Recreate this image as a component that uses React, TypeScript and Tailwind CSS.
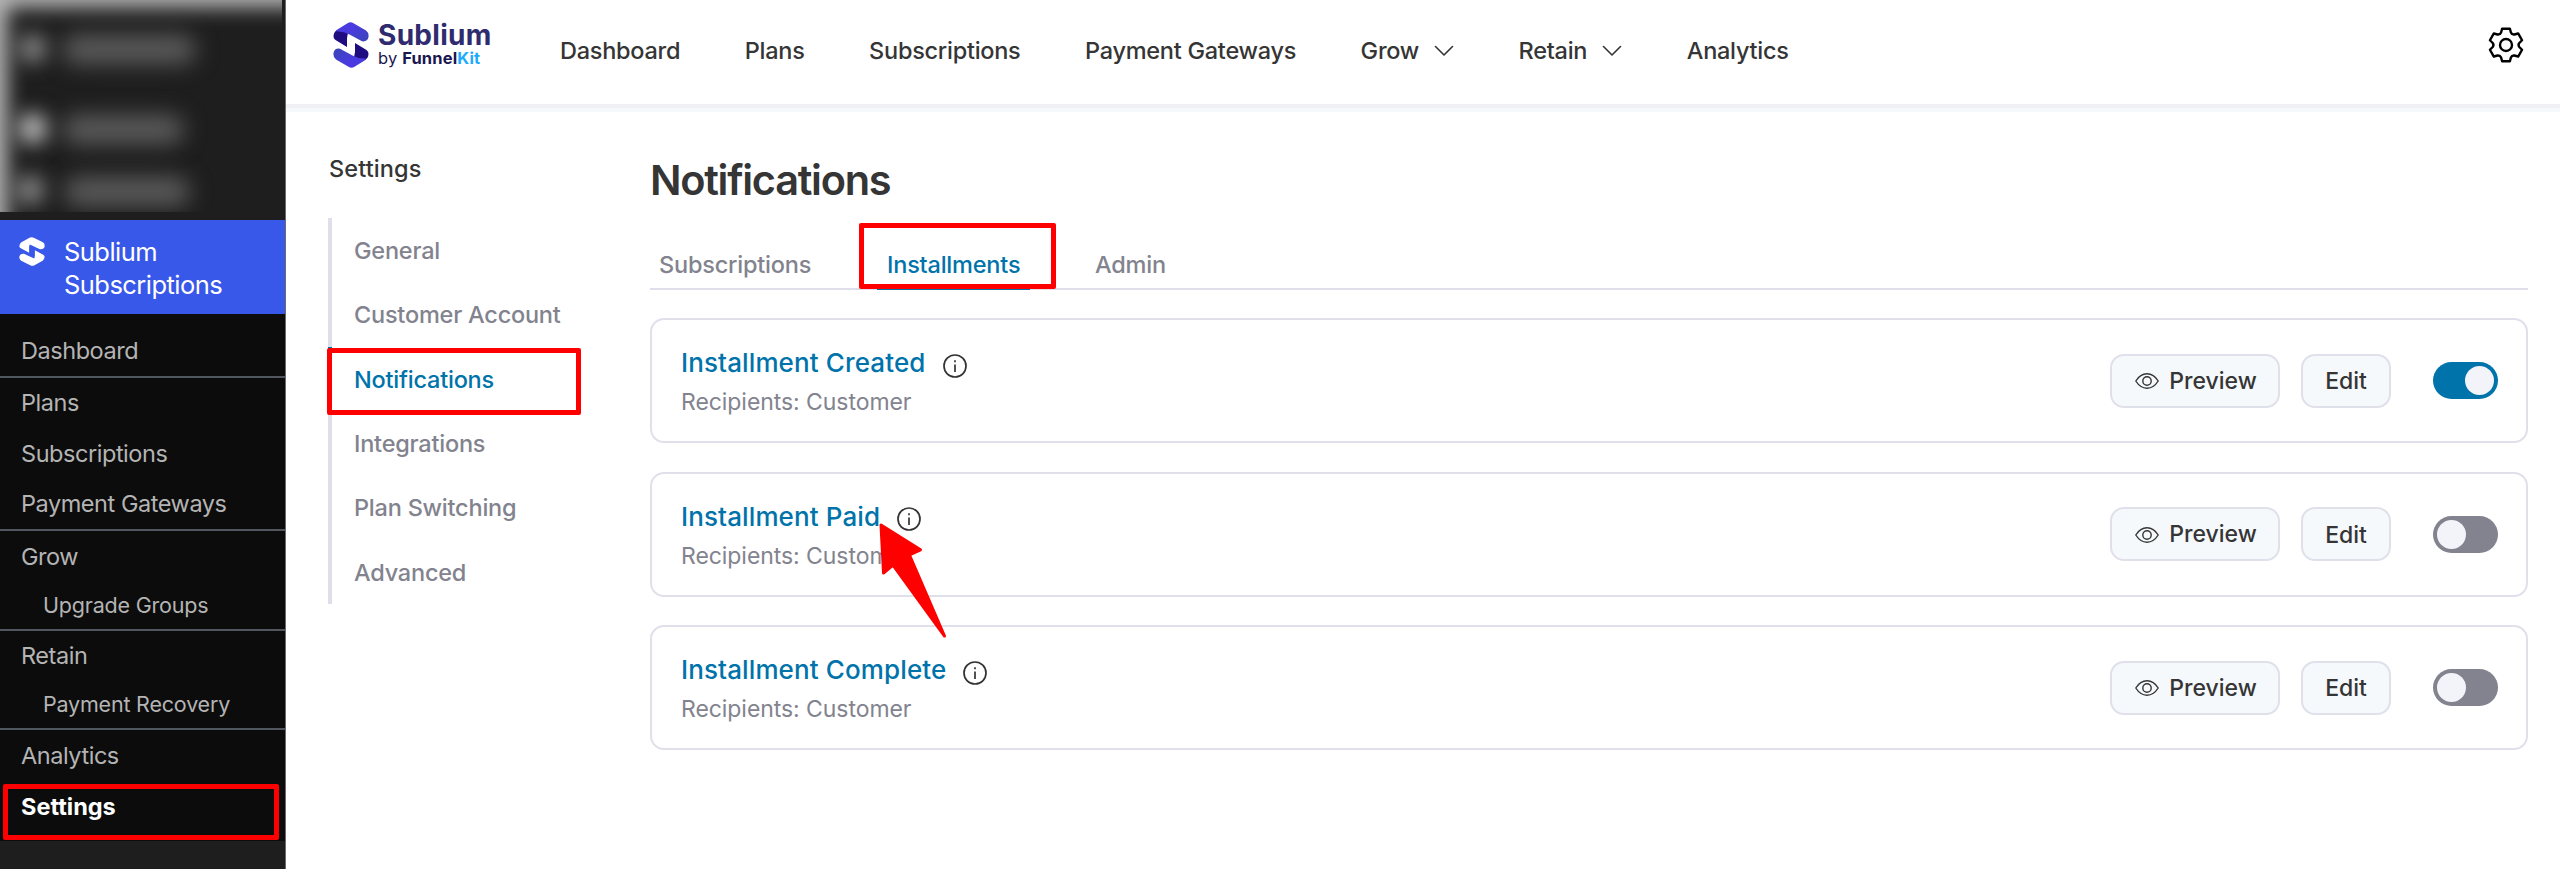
import clsx from "clsx";

const sidebarItems = [
  { label: "Dashboard", divider: true },
  { label: "Plans" },
  { label: "Subscriptions" },
  { label: "Payment Gateways", divider: true },
  { label: "Grow" },
  { label: "Upgrade Groups", child: true, divider: true },
  { label: "Retain" },
  { label: "Payment Recovery", child: true, divider: true },
  { label: "Analytics" },
  { label: "Settings", active: true },
];

const navItems = [
  { label: "Dashboard" },
  { label: "Plans" },
  { label: "Subscriptions" },
  { label: "Payment Gateways" },
  { label: "Grow", menu: true },
  { label: "Retain", menu: true },
  { label: "Analytics" },
];

const settingsItems = [
  "General",
  "Customer Account",
  "Notifications",
  "Integrations",
  "Plan Switching",
  "Advanced",
];

const notifications = [
  { title: "Installment Created", enabled: true },
  { title: "Installment Paid", enabled: false, arrow: true },
  { title: "Installment Complete", enabled: false },
];

// one tooth of the gear, repeated every 60 degrees
const tooth = [
  [-3.9, -16.3],
  [3.9, -16.3],
  [4.9, -12.5],
  [5.9, -10.2],
  [8.37, -10.5],
];

function gearPath() {
  let d = "";
  for (let i = 0; i < 6; i++) {
    const a = (i * Math.PI) / 3;
    const [p0, p1, p2, q, p3] = tooth.map(([x, y]) =>
      `${(x * Math.cos(a) - y * Math.sin(a)).toFixed(2)} ${(x * Math.sin(a) + y * Math.cos(a)).toFixed(2)}`
    );
    d += `${i === 0 ? "M" : "L"}${p0}L${p1}L${p2}Q${q} ${p3}`;
  }
  return d + "Z";
}

function GearIcon() {
  return (
    <svg className="h-[38px] w-[38px]" viewBox="-19 -19 38 38" fill="none" stroke="#000" strokeWidth="2.4" strokeLinejoin="round">
      <path d={gearPath()} />
      <circle r="6" />
    </svg>
  );
}

function LogoMark({ className, mono }: { className?: string; mono?: boolean }) {
  return (
    <svg className={className} viewBox="0 0 36 46" preserveAspectRatio="none">
      <defs>
        <linearGradient id="logo-top" x1="0" y1="0" x2="1" y2="1">
          <stop offset="0.4" stopColor="#4a3be0" />
          <stop offset="1" stopColor="#3a45b4" />
        </linearGradient>
        <linearGradient id="logo-bottom" x1="1" y1="1" x2="0" y2="0">
          <stop offset="0.4" stopColor="#4a3be0" />
          <stop offset="1" stopColor="#3a45b4" />
        </linearGradient>
      </defs>
      <path d="M.5 14.500Q.5 16.500 2.500 18L14 25V16L15.500 8 4 8Q.5 10 .5 14.500Z" fill={mono ? "#fff" : "#1f0c80"} />
      <path d="M35.500 31.500Q35.500 29.500 33.500 28L22 21V30L20.500 38 32 38Q35.500 36 35.500 31.500Z" fill={mono ? "#fff" : "#1f0c80"} />
      <path d="M14.500 1.200Q17.500-.8 20.500 1.200L33 8.500Q36 10.500 35.500 15 34.500 20 29 19.300L16.500 12.500Q10 9 4 9.500 2.500 9 4 7.800Z" fill={mono ? "#fff" : "url(#logo-top)"} />
      <path d="M21.500 44.800Q18.500 46.800 15.500 44.800L3 37.500Q0 35.500 .5 31 1.500 26 7 26.700L19.500 33.500Q26 37 32 36.500 33.500 37 32 38.200Z" fill={mono ? "#fff" : "url(#logo-bottom)"} />
    </svg>
  );
}

function ChevronIcon() {
  return (
    <svg className="h-[12px] w-[20px]" viewBox="0 0 20 12" fill="none" stroke="#353535" strokeWidth="1.6" strokeLinecap="round" strokeLinejoin="round">
      <path d="M1.500 1.500 10 10 18.500 1.500" />
    </svg>
  );
}

function InfoIcon() {
  return (
    <svg className="mt-[5px] h-[24px] w-[24px]" viewBox="0 0 24 24" fill="none" stroke="#333" strokeWidth="1.7">
      <circle cx="12" cy="12" r="11" />
      <path d="M12 10.500v7.500" />
      <path d="M12 6.300v2" />
    </svg>
  );
}

function EyeIcon() {
  return (
    <svg className="h-[16px] w-[24px]" viewBox="0 0 24 16" fill="none" stroke="#353535" strokeWidth="1.4">
      <path d="M.8 8Q5.300.8 12 .8T23.200 8Q18.700 15.200 12 15.200T.8 8Z" />
      <circle cx="12" cy="8" r="4.200" />
    </svg>
  );
}

function Sidebar() {
  return (
    <aside className="flex w-[286px] shrink-0 flex-col border-r border-[#6b6b6b] bg-[#1e1e1e]">
      {/* Obscured WordPress menu entries */}
      <div className="relative h-[212px] w-[282px] overflow-hidden">
        <div className="absolute left-[18px] top-[34px] h-[29px] w-[29px] rounded-full bg-[#858484] blur-[10px]" />
        <div className="absolute left-[62px] top-[35px] h-[29px] w-[134px] rounded-full bg-[#5c5b5b] blur-[11px]" />
        <div className="absolute left-[17px] top-[113px] h-[31px] w-[31px] rounded-full bg-[#b8b7b7] blur-[10px]" />
        <div className="absolute left-[62px] top-[115px] h-[29px] w-[122px] rounded-full bg-[#5c5b5b] blur-[11px]" />
        <div className="absolute left-[15px] top-[175px] h-[30px] w-[30px] rounded-full bg-[#858484] blur-[10px]" />
        <div className="absolute left-[64px] top-[177px] h-[29px] w-[126px] rounded-full bg-[#5c5b5b] blur-[11px]" />
        <div className="absolute -bottom-10 -right-10 left-0 top-0 shadow-[inset_4px_4px_20px_3px_#bcbcbc]" />
      </div>
      <div className="mt-[8px] flex h-[94px] bg-[#3858e9] pl-[19px] pt-[17px]">
        <LogoMark mono className="h-[29px] w-[26px]" />
        <div className="ml-[19px] -mt-[2px] text-[25.500px] leading-[33px] tracking-[-0.550px] text-white">
          Sublium
          <br />
          Subscriptions
        </div>
      </div>
      <nav className="relative h-[527px] bg-[#0c0c0c] pt-[11px]">
        {sidebarItems.map((item) => (
          <div
            key={item.label}
            className={clsx(
              "flex items-center",
              item.child ? "h-[47px] pl-[43px] text-[21.500px] tracking-[-0.200px]" : "h-[50.500px] pl-[21px] text-[23.500px]",
              item.divider && "box-content border-b-2 border-[#50575e]",
              item.active ? "pt-[2px] font-bold text-white" : "text-[#b4b4b4]",
              !item.child && !item.active && "tracking-[-0.450px]"
            )}
          >
            {item.label}
          </div>
        ))}
        <div className="absolute left-[3px] top-[470px] h-[56px] w-[276px] rounded-[2px] border-[5px] border-[#ff0000]" />
      </nav>
    </aside>
  );
}

function Header() {
  return (
    <header className="flex h-[112px] items-start border-b-4 border-[#f6f9fc] pl-[47px] pr-[35px]">
      <div className="flex w-[227px] pt-[22px]">
        <LogoMark className="h-[46px] w-[36px]" />
        <div className="ml-[9px]">
          <div className="text-[28px] font-bold leading-[27px] tracking-[0.300px] text-[#2f2b6f]">Sublium</div>
          <div className="mt-[1px] text-[16.500px] leading-[16px] tracking-[0.150px] text-[#1a1651]">
            by <span className="font-bold">Funnel</span>
            <span className="font-bold text-[#1daaff]">Kit</span>
          </div>
        </div>
      </div>
      <nav className="flex h-[102px] flex-1 items-center gap-[64.500px]">
        {navItems.map((item) => (
          <div key={item.label} className="flex items-center gap-[15px] text-[23.500px] font-medium tracking-[-0.260px]">
            {item.label}
            {item.menu && <ChevronIcon />}
          </div>
        ))}
      </nav>
      <div className="pt-[26px]">
        <GearIcon />
      </div>
    </header>
  );
}

function SettingsNav() {
  return (
    <div className="w-[322px] shrink-0 pt-[42px]">
      <h2 className="pl-px text-[23.500px] font-medium leading-[30px] tracking-[0.100px]">Settings</h2>
      <ul className="relative mt-[34px]">
        {settingsItems.map((label) => (
          <li
            key={label}
            className={clsx(
              "flex h-[64.350px] items-center border-l-4 pl-[22px] pt-px text-[23.500px] font-medium tracking-[-0.220px]",
              label === "Notifications" ? "border-[#0073aa] text-[#0073aa]" : "border-[#dfdfeb] text-[#82838e]"
            )}
          >
            {label}
          </li>
        ))}
        <div className="absolute -left-[1px] top-[130px] h-[67px] w-[254px] rounded-[2px] border-[5px] border-[#ff0000]" />
      </ul>
    </div>
  );
}

function Toggle({ on }: { on: boolean }) {
  return (
    <div className={clsx("ml-[42px] flex h-[37px] w-[65px] items-center rounded-full px-[4px]", on ? "justify-end bg-[#0073aa]" : "bg-[#83828f]")}>
      <div className="h-[29px] w-[29px] rounded-full bg-[#f3f4fa]" />
    </div>
  );
}

function RedArrow() {
  return (
    <svg className="absolute left-[225px] top-[47px] z-10 h-[120px] w-[74px]" viewBox="877 521 74 120" fill="#ff0000" stroke="#ff0000" strokeWidth="3" strokeLinejoin="round">
      <path d="M881 525 920.500 549.800 909.500 555 944.500 636 893 565 883.500 573Z" />
    </svg>
  );
}

function NotificationCard({ title, enabled, arrow }: { title: string; enabled: boolean; arrow?: boolean }) {
  return (
    <div className="relative flex h-[125px] items-center rounded-[14px] border-2 border-[#e0e0eb] pl-[29px] pr-[28px]">
      <div className="flex-1 pt-[4px]">
        <div className="flex items-center gap-[17px]">
          <span className="text-[26px] font-medium leading-[38px] tracking-[0.120px] text-[#0073aa]">{title}</span>
          <InfoIcon />
        </div>
        <div className="pt-px text-[23px] leading-[38px] tracking-[-0.060px] text-[#82838e]">Recipients: Customer</div>
      </div>
      <button className="flex h-[54px] w-[170px] items-center justify-center gap-[10px] rounded-[14px] border-2 border-[#e0e0eb] bg-[#f6f9fc] pl-[2px] pt-px text-[23px] font-medium">
        <EyeIcon />
        Preview
      </button>
      <button className="ml-[21px] h-[54px] w-[90px] rounded-[14px] border-2 border-[#e0e0eb] bg-[#f6f9fc] pt-[2px] text-[23px] font-medium">
        Edit
      </button>
      <Toggle on={enabled} />
      {arrow && <RedArrow />}
    </div>
  );
}

export default function App() {
  return (
    <div className="flex h-[869px] w-[2560px] overflow-hidden bg-white font-['Inter',sans-serif] text-[#353535]">
      <Sidebar />
      <div className="flex-1">
        <div className="relative">
          <Header />
          <div className="absolute inset-x-0 top-[104px] h-[4px] bg-[#f1f1f5]" />
        </div>
        <div className="flex pl-[42px] pr-[32px]">
          <SettingsNav />
          <main className="flex-1">
            <h1 className="pt-[42px] text-[41.500px] font-semibold leading-[52px] tracking-[-1.280px]">Notifications</h1>
            <div className="relative mt-[35px] flex h-[49px] border-b-2 border-[#dfdfeb] pl-[9px] text-[23.500px] font-medium leading-[48px] tracking-[-0.200px] text-[#82838e]">
              <div className="w-[218px]">Subscriptions</div>
              <div className="relative z-10 -mb-[2px] h-[49px] w-[153px] border-b-4 border-[#0073aa] pl-[10px] text-[#0073aa]">Installments</div>
              <div className="ml-[65px]">Admin</div>
              <div className="absolute -top-[18px] left-[209px] z-20 h-[66px] w-[197px] rounded-[2px] border-[5px] border-[#ff0000]" />
            </div>
            <div className="mt-[28px] flex flex-col gap-[28.600px]">
              {notifications.map((item) => (
                <NotificationCard key={item.title} {...item} />
              ))}
            </div>
          </main>
        </div>
      </div>
    </div>
  );
}
